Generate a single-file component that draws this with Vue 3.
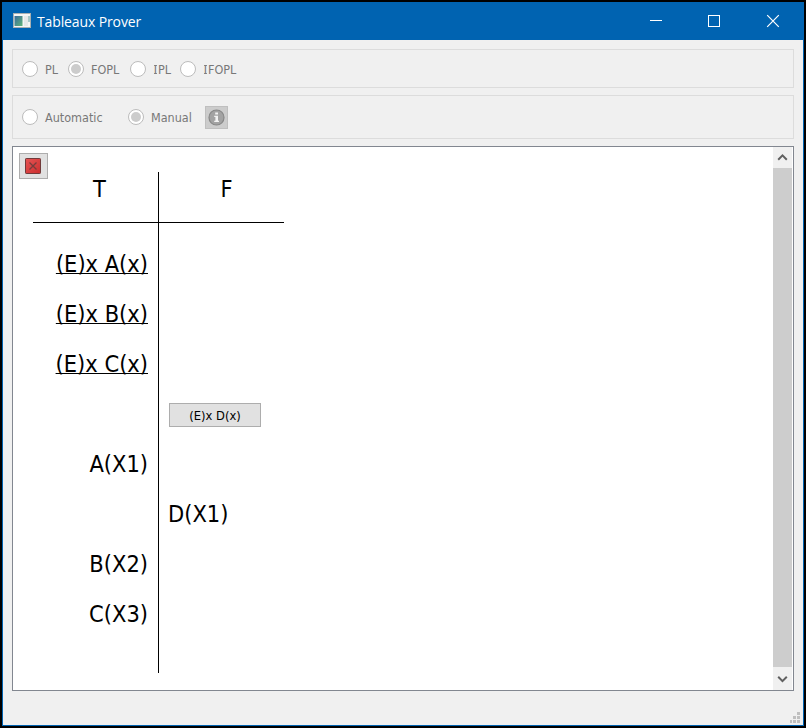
<script setup>
const logics = [
  { label: 'PL', serif: false, width: 46 },
  { label: 'FOPL', serif: false, checked: true, width: 62 },
  { label: 'PL', serif: true, width: 50 },
  { label: 'FOPL', serif: true, width: 64 },
]
const modes = [
  { label: 'Automatic', width: 106 },
  { label: 'Manual', checked: true, width: 77 },
]
const rows = [
  { t: '(E)x A(x)', used: true },
  { t: '(E)x B(x)', used: true },
  { t: '(E)x C(x)', used: true },
  { action: '(E)x D(x)' },
  { t: 'A(X1)' },
  { f: 'D(X1)' },
  { t: 'B(X2)' },
  { t: 'C(X3)' },
]
</script>

<template>
  <div class="desktop">
    <div class="window">
      <header class="titlebar">
        <svg class="app-icon" width="18" height="15" viewBox="0 0 18 15">
          <defs>
            <linearGradient id="appGreen" x1="0" y1="0" x2="1" y2="1">
              <stop offset="0" stop-color="#386a9c" />
              <stop offset="1" stop-color="#61b57a" />
            </linearGradient>
          </defs>
          <rect width="18" height="15" fill="#a9b0b2" />
          <rect x="1" y="1" width="16" height="13" fill="#f5f5f4" />
          <rect x="1.5" y="3" width="8" height="10" fill="url(#appGreen)" />
          <rect x="11" y="3" width="4" height="10" fill="#e5e8e9" />
          <rect x="15.5" y="3" width="1" height="6" fill="#5a9c99" />
        </svg>
        <span class="title">Tableaux Prover</span>
        <svg class="controls" width="160" height="38" viewBox="0 0 160 38" fill="none" stroke="#fff">
          <path d="M7 17.5H19" />
          <rect x="65.5" y="12.5" width="11" height="11" />
          <path d="M124.2 12.2L135.8 23.8M135.8 12.2L124.2 23.8" stroke-width="1.2" />
        </svg>
      </header>

      <main class="content">
        <section class="group logic">
          <div v-for="(o, i) in logics" :key="i" class="option" :style="{ width: o.width + 'px' }">
            <span class="radio" :class="{ checked: o.checked }"></span>
            <span class="label"><span v-if="o.serif" class="slab">I</span>{{ o.label }}</span>
          </div>
        </section>

        <section class="group mode">
          <div v-for="o in modes" :key="o.label" class="option" :style="{ width: o.width + 'px' }">
            <span class="radio" :class="{ checked: o.checked }"></span>
            <span class="label">{{ o.label }}</span>
          </div>
          <div class="info">
            <svg width="17" height="17" viewBox="0 0 17 17">
              <circle cx="8.5" cy="8.5" r="7.5" fill="#a3a3a3" stroke="#888" stroke-width="1.2" />
              <path d="M7.2 3.5H10V5.5H7.2ZM6.2 6.8H10V11.8H11V13H6.2V11.8H7.4V8H6.2Z" fill="#f2f2f2" />
            </svg>
          </div>
        </section>

        <section class="canvas">
          <div class="tableau">
            <div class="row head">
              <div class="cell t">T</div>
              <div class="cell f">F</div>
            </div>
            <div class="body">
              <div class="cell t lead"></div>
              <div class="cell f lead"></div>
              <template v-for="(r, i) in rows" :key="i">
                <div class="cell t" :class="{ used: r.used }">{{ r.t }}</div>
                <div class="cell f">
                  <button v-if="r.action" class="apply">{{ r.action }}</button>
                  <template v-else>{{ r.f }}</template>
                </div>
              </template>
              <div class="cell t tail"></div>
              <div class="cell f tail"></div>
            </div>
          </div>
          <button class="close-branch">
            <svg width="16" height="16" viewBox="0 0 16 16">
              <defs>
                <linearGradient id="closeRed" x1="0" y1="0" x2="1" y2="1">
                  <stop offset="0" stop-color="#e65555" />
                  <stop offset="1" stop-color="#cc2e2e" />
                </linearGradient>
              </defs>
              <rect x="0.5" y="0.5" width="15" height="15" rx="0.7" fill="url(#closeRed)" stroke="#713b3b" />
              <path d="M4.5 4.5L11.5 11.5M11.5 4.5L4.5 11.5" stroke="#753d3d" stroke-width="1.3" />
            </svg>
          </button>
          <div class="scrollbar">
            <svg width="19" height="21" viewBox="0 0 19 21" fill="none" stroke="#606060" stroke-width="2">
              <path d="M5.2 12.7L9.5 8.4L13.8 12.7" />
            </svg>
            <div class="thumb"></div>
            <svg width="19" height="23" viewBox="0 0 19 23" fill="none" stroke="#606060" stroke-width="2">
              <path d="M5.2 9.8L9.5 14.1L13.8 9.8" />
            </svg>
          </div>
        </section>

        <footer class="status">
          <svg width="10" height="11" viewBox="0 0 10 11" fill="#bfbfbf">
            <path d="M7 0h3v3h-3zM3 4h3v3h-3zM7 4h3v3h-3zM0 8h2v3h-2zM3 8h3v3h-3zM7 8h3v3h-3z" />
          </svg>
        </footer>
      </main>
    </div>
  </div>
</template>

<style>
body {
  background: #000;
}
</style>

<style scoped>
* {
  box-sizing: border-box;
}
.desktop {
  width: 806px;
  height: 728px;
  padding: 2px;
  background: #000;
  font-family: 'DejaVu Sans Condensed', 'DejaVu Sans', sans-serif;
  font-stretch: condensed;
}
.window {
  width: 802px;
  height: 724px;
  border: 1px solid #0063b1;
  background: #f0f0f0;
  display: flex;
  flex-direction: column;
}
.titlebar {
  height: 37px;
  flex: none;
  background: #0063b1;
  display: flex;
  align-items: center;
  padding-left: 10px;
}
.app-icon {
  margin-bottom: 2px;
}
.title {
  margin-left: 6px;
  color: #fff;
  font: 14px/20px 'Open Sans', sans-serif;
  font-stretch: normal;
  letter-spacing: -0.12px;
}
.controls {
  margin-left: auto;
}
.content {
  flex: 1;
  display: flex;
  flex-direction: column;
  padding: 9px 9px 0;
}
.group {
  border: 1px solid #dcdcdc;
  display: flex;
  align-items: center;
  padding-left: 9px;
  flex: none;
}
.logic {
  height: 39px;
  padding-top: 1px;
}
.mode {
  height: 44px;
  margin-top: 7px;
}
.option {
  display: flex;
  align-items: center;
  flex: none;
}
.radio {
  width: 16px;
  height: 16px;
  flex: none;
  border: 1px solid #bcbcbc;
  border-radius: 50%;
  background: #fff;
  display: grid;
  place-items: center;
}
.radio.checked::after {
  content: '';
  width: 10px;
  height: 10px;
  border-radius: 50%;
  background: #ccc;
}
.label {
  margin-left: 7px;
  padding-top: 1px;
  font-size: 12.5px;
  line-height: 16px;
  color: #787878;
  white-space: nowrap;
}
/* Capital I with short horizontal bars at cap height and baseline */
.slab {
  display: inline-block;
  width: 5px;
  height: 16px;
  text-align: center;
  background:
    linear-gradient(#8c8c8c, #8c8c8c) 1px 3px / 3px 1px no-repeat,
    linear-gradient(#8c8c8c, #8c8c8c) 1px 11px / 3px 1px no-repeat;
}
.info {
  width: 23px;
  height: 23px;
  border: 1px solid #bfbfbf;
  background: #ccc;
  display: grid;
  place-items: center;
}
.canvas {
  position: relative;
  height: 545px;
  margin-top: 7px;
  flex: none;
  border: 1px solid #828790;
  background: #fff;
  display: flex;
  justify-content: space-between;
  padding-right: 1px;
}
.tableau {
  width: 251px;
  margin: 25px 0 0 20px;
  font-size: 23.4px;
  color: #000;
}
.row,
.body {
  display: grid;
  grid-template-columns: 126px 125px;
}
.cell {
  height: 50px;
  line-height: 50px;
  white-space: nowrap;
}
.cell.t {
  border-right: 1px solid #000;
  padding-right: 10px;
  text-align: right;
}
.cell.f {
  padding-left: 9px;
}
.head {
  border-bottom: 1px solid #000;
}
.head .cell {
  line-height: 35px;
}
.head .cell.t {
  padding: 0 0 0 8px;
  text-align: center;
}
.head .cell.f {
  padding: 0 0 0 10px;
  text-align: center;
}
.cell.lead {
  height: 16px;
}
.cell.tail {
  height: 34px;
}
.used {
  text-decoration: underline;
  text-decoration-thickness: 1px;
  text-underline-offset: 1px;
  text-decoration-skip-ink: none;
}
.apply {
  display: block;
  width: 92px;
  height: 24px;
  margin: 14px 0 0 1px;
  padding: 1px 0 0;
  border: 1px solid #adadad;
  background: #e1e1e1;
  font: inherit;
  font-size: 12.8px;
  line-height: 21px;
  color: #000;
}
.close-branch {
  position: absolute;
  left: 6px;
  top: 6px;
  width: 29px;
  height: 26px;
  padding: 0 1px 0 0;
  border: 1px solid #adadad;
  background: #e1e1e1;
  display: grid;
  place-items: center;
}
.scrollbar {
  width: 19px;
  background: #f0f0f0;
  display: flex;
  flex-direction: column;
}
.scrollbar svg {
  flex: none;
}
.thumb {
  flex: 1;
  background: #cdcdcd;
}
.status {
  flex: 1;
  display: flex;
  justify-content: flex-end;
  align-items: flex-end;
  padding-bottom: 2px;
  margin-right: -6px;
}
</style>
